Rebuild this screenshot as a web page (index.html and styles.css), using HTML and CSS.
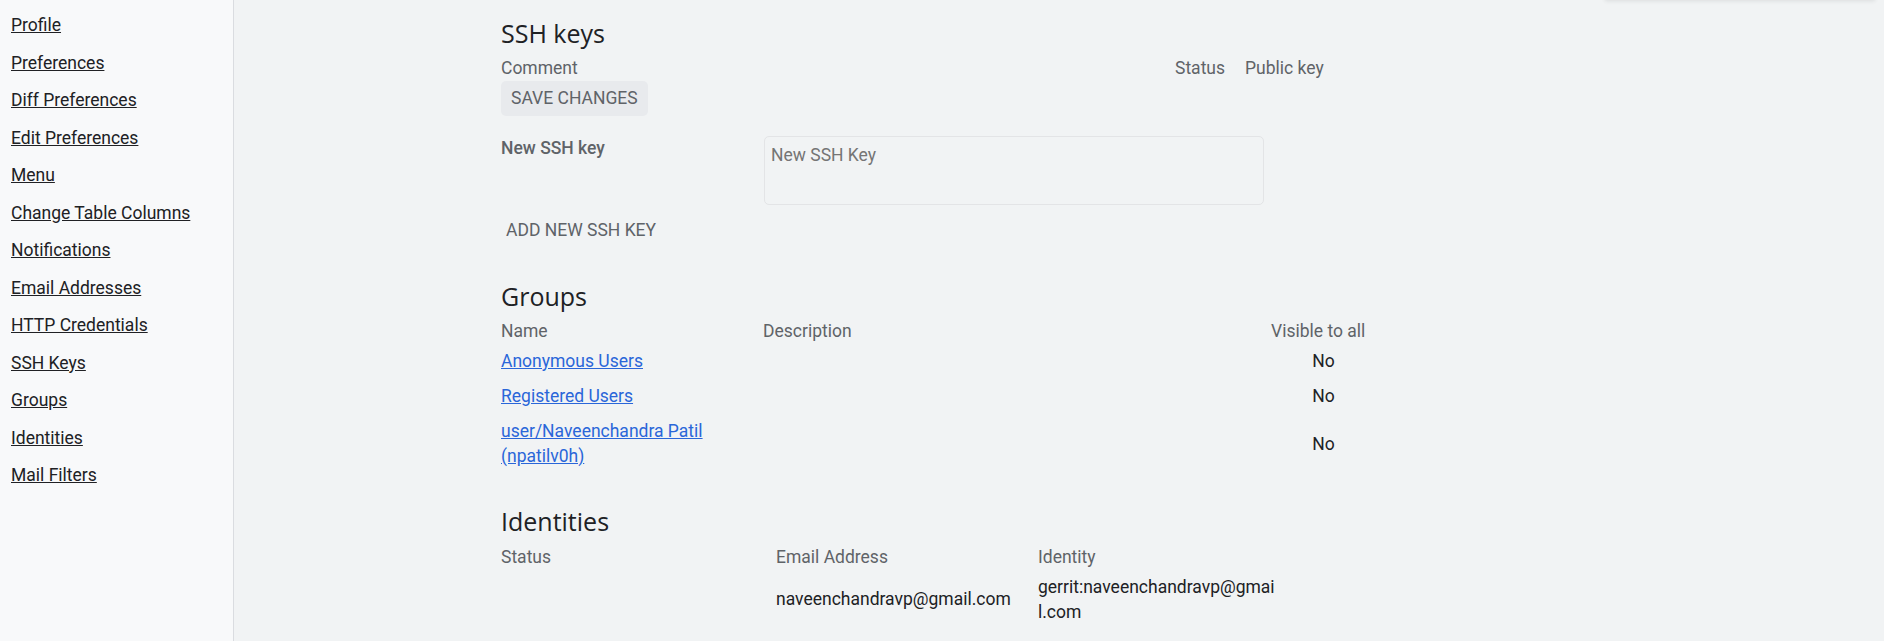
FILE: index.html
```html
<!DOCTYPE html>
<html lang="en">
<head>
<meta charset="utf-8">
<title>Settings</title>
<link rel="stylesheet" href="styles.css">
</head>
<body>
<div class="page">
  <nav class="sidebar">
    <ul class="nav-list">
      <li><a href="#">Profile</a></li>
      <li><a href="#">Preferences</a></li>
      <li><a href="#">Diff Preferences</a></li>
      <li><a href="#">Edit Preferences</a></li>
      <li><a href="#">Menu</a></li>
      <li><a href="#">Change Table Columns</a></li>
      <li><a href="#">Notifications</a></li>
      <li><a href="#">Email Addresses</a></li>
      <li><a href="#">HTTP Credentials</a></li>
      <li><a href="#">SSH Keys</a></li>
      <li><a href="#">Groups</a></li>
      <li><a href="#">Identities</a></li>
      <li><a href="#">Mail Filters</a></li>
    </ul>
  </nav>
  <main class="main">
    <div class="top-shadow"></div>
    <section class="section">
      <h2 class="heading">SSH keys</h2>
      <div class="ssh-head">
        <span class="col-comment">Comment</span>
        <span class="col-status">Status</span>
        <span class="col-key">Public key</span>
      </div>
      <button class="btn-filled" type="button">SAVE CHANGES</button>
      <div class="new-key">
        <span class="new-key-label">New SSH key</span>
        <textarea class="new-key-input" placeholder="New SSH Key"></textarea>
      </div>
      <button class="btn-link" type="button">ADD NEW SSH KEY</button>
    </section>

    <section class="section section-groups">
      <h2 class="heading">Groups</h2>
      <table class="tbl groups">
        <thead>
          <tr>
            <th class="g-name">Name</th>
            <th class="g-desc">Description</th>
            <th class="g-vis">Visible to all</th>
          </tr>
        </thead>
        <tbody>
          <tr>
            <td class="g-name"><a href="#">Anonymous Users</a></td>
            <td class="g-desc"></td>
            <td class="g-vis">No</td>
          </tr>
          <tr>
            <td class="g-name"><a href="#">Registered Users</a></td>
            <td class="g-desc"></td>
            <td class="g-vis">No</td>
          </tr>
          <tr>
            <td class="g-name"><a href="#">user/Naveenchandra Patil (npatilv0h)</a></td>
            <td class="g-desc"></td>
            <td class="g-vis">No</td>
          </tr>
        </tbody>
      </table>
    </section>

    <section class="section section-ids">
      <h2 class="heading">Identities</h2>
      <table class="tbl ids">
        <thead>
          <tr>
            <th class="i-status">Status</th>
            <th class="i-email">Email Address</th>
            <th class="i-ident">Identity</th>
          </tr>
        </thead>
        <tbody>
          <tr>
            <td class="i-status"></td>
            <td class="i-email">naveenchandravp@gmail.com</td>
            <td class="i-ident">gerrit:naveenchandravp@gmail.com</td>
          </tr>
        </tbody>
      </table>
    </section>
  </main>
</div>
</body>
</html>
```

FILE: styles.css
```css
* { box-sizing: border-box; }

html, body {
  margin: 0;
  padding: 0;
  height: 100%;
}

body {
  font-family: Roboto, "Liberation Sans", Arial, sans-serif;
  font-size: 17.5px;
  line-height: 25px;
  color: #202124;
  background: #f1f3f4;
  overflow: hidden;
}

.page {
  display: flex;
  height: 641px;
}

.sidebar {
  width: 234px;
  flex: 0 0 234px;
  background: #f8f9fa;
  border-right: 1px solid #dadce0;
}

.nav-list {
  list-style: none;
  margin: 0;
  padding: 7px 0 0 11px;
}

.nav-list li {
  line-height: 37.5px;
  height: 37.5px;
}

.nav-list a {
  color: #202124;
  text-decoration: underline;
}

.main {
  position: relative;
  flex: 1;
  padding: 15.5px 0 0 267px;
}

.top-shadow {
  position: absolute;
  top: -20px;
  left: 1371px;
  width: 270px;
  height: 20px;
  background: #f1f3f4;
  box-shadow: 0 1px 4px rgba(60, 64, 67, 0.12);
}

.section-groups {
  margin-top: 31px;
}

.section-ids {
  margin-top: 30px;
}

.heading {
  margin: 0 0 5.5px;
  font-family: "Open Sans", Roboto, sans-serif;
  font-size: 25px;
  line-height: 35px;
  font-weight: 400;
  color: #202124;
}

.ssh-head {
  display: flex;
  color: #5f6368;
  height: 25px;
}

.col-comment { width: 674px; }
.col-status { width: 70px; }

.btn-filled {
  display: block;
  height: 35px;
  margin: 0;
  padding: 0 10px;
  border: 0;
  border-radius: 5px;
  background: #e8eaed;
  color: #5f6368;
  font-family: inherit;
  font-size: 17.5px;
  line-height: 35px;
}

.new-key {
  display: flex;
  align-items: flex-start;
  margin-top: 19.5px;
}

.new-key-label {
  width: 263px;
  flex: 0 0 263px;
  margin-top: 0.5px;
  font-weight: 500;
  color: #5f6368;
}

.new-key-input {
  width: 500px;
  height: 69.5px;
  margin: 0;
  padding: 6px;
  border: 1px solid #e3e4e6;
  border-radius: 5px;
  background: transparent;
  font-family: inherit;
  font-size: 17.5px;
  line-height: 25px;
  color: #202124;
  resize: none;
}

.new-key-input::placeholder {
  color: #757575;
}

.btn-link {
  display: block;
  margin: 7.5px 0 0;
  padding: 5px 5px;
  border: 0;
  background: transparent;
  color: #5f6368;
  font-family: inherit;
  font-size: 17.5px;
  line-height: 25px;
}

.tbl {
  border-collapse: collapse;
  border-spacing: 0;
}

.tbl th {
  padding: 0;
  font-weight: 400;
  text-align: left;
  color: #5f6368;
  line-height: 25px;
  vertical-align: middle;
}

.tbl td {
  padding: 5px 0;
  line-height: 25px;
  vertical-align: middle;
}

.tbl a {
  color: #2a66d9;
  text-decoration: underline;
}

.g-name { width: 262px; }
.g-desc { width: 508px; }
.g-vis { width: 105px; }
.groups td.g-vis { text-align: center; }

.i-status { width: 275px; }
.i-email { width: 262px; }
.i-ident {
  width: 238px;
  word-break: break-all;
}
```
